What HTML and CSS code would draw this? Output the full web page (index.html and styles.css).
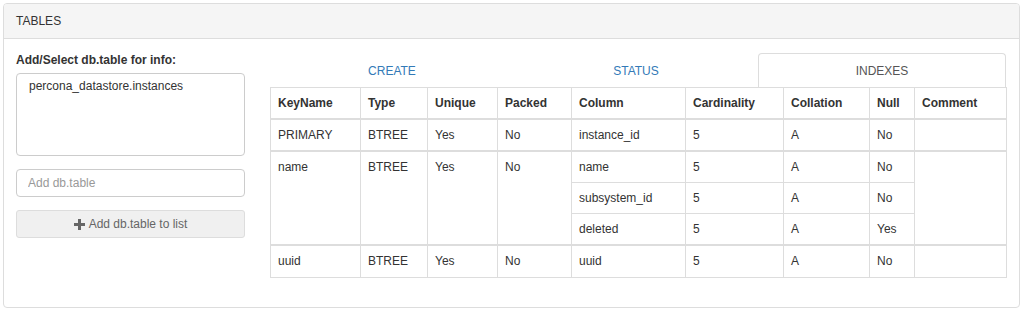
FILE: index.html
```html
<!DOCTYPE html>
<html lang="en">
<head>
    <meta charset="UTF-8">
    <title>Tables</title>
    <link rel="stylesheet" href="styles.css">
</head>
<body>
    <div class="panel">
        <div class="panel-heading">TABLES</div>
        <div class="panel-body">
            <div class="side">
                <label class="side-label">Add/Select db.table for info:</label>
                <div class="listbox">
                    <div class="listbox-item">percona_datastore.instances</div>
                </div>
                <input type="text" class="field" placeholder="Add db.table">
                <button class="btn">
                    <svg class="icon-plus" width="11" height="11" viewBox="0 0 11 11"><path d="M4 0h3v4h4v3H7v4H4V7H0V4h4z" fill="#666"/></svg>
                    Add db.table to list
                </button>
            </div>
            <div class="main">
                <ul class="tabs">
                    <li><a href="#">CREATE</a></li>
                    <li><a href="#">STATUS</a></li>
                    <li class="active"><a href="#">INDEXES</a></li>
                </ul>
                <table class="grid">
                    <colgroup>
                        <col style="width:90px"><col style="width:67px"><col style="width:70px"><col style="width:74px"><col style="width:114px"><col style="width:98px"><col style="width:86px"><col style="width:45px"><col style="width:92px">
                    </colgroup>
                    <thead>
                        <tr><th>KeyName</th><th>Type</th><th>Unique</th><th>Packed</th><th>Column</th><th>Cardinality</th><th>Collation</th><th>Null</th><th>Comment</th></tr>
                    </thead>
                    <tbody>
                        <tr><td>PRIMARY</td><td>BTREE</td><td>Yes</td><td>No</td><td>instance_id</td><td>5</td><td>A</td><td>No</td><td></td></tr>
                    </tbody>
                    <tbody>
                        <tr><td rowspan="3">name</td><td rowspan="3">BTREE</td><td rowspan="3">Yes</td><td rowspan="3">No</td><td>name</td><td>5</td><td>A</td><td>No</td><td rowspan="3"></td></tr>
                        <tr><td>subsystem_id</td><td>5</td><td>A</td><td>No</td></tr>
                        <tr><td>deleted</td><td>5</td><td>A</td><td>Yes</td></tr>
                    </tbody>
                    <tbody>
                        <tr><td>uuid</td><td>BTREE</td><td>Yes</td><td>No</td><td>uuid</td><td>5</td><td>A</td><td>No</td><td></td></tr>
                    </tbody>
                </table>
            </div>
        </div>
    </div>
</body>
</html>
```

FILE: styles.css
```css
* {
    box-sizing: border-box;
}
body {
    margin: 0;
    padding: 3px 4px 0 3px;
    font-family: "Liberation Sans", Arial, sans-serif;
    font-size: 12px;
    color: #333;
    background: #fff;
}
.panel {
    border: 1px solid #ddd;
    border-radius: 4px;
    height: 305px;
    width: 1017px;
}
.panel-heading {
    background-color: #f5f5f5;
    border-bottom: 1px solid #ddd;
    border-radius: 3px 3px 0 0;
    height: 35px;
    line-height: 34px;
    padding-left: 12px;
}
.panel-body {
    display: flex;
    gap: 25px;
    padding: 13px 13px 0 12px;
}
.side {
    width: 229px;
    display: flex;
    flex-direction: column;
}
.side-label {
    font-weight: bold;
    line-height: 17px;
    margin-bottom: 4px;
}
.listbox {
    height: 83px;
    border: 1px solid #ccc;
    border-radius: 4px;
    padding: 4px 12px;
}
.listbox-item {
    line-height: 16px;
}
.field {
    margin-top: 13px;
    height: 28px;
    border: 1px solid #ccc;
    border-radius: 4px;
    padding: 0 11px;
    font-family: inherit;
    font-size: 12px;
    color: #555;
}
.field::placeholder {
    color: #999;
}
.btn {
    margin-top: 13px;
    height: 28px;
    border: 1px solid #ddd;
    border-radius: 3px;
    background-color: #f0f0f0;
    color: #666;
    font-family: inherit;
    font-size: 12px;
    display: flex;
    align-items: center;
    justify-content: center;
    gap: 4px;
    cursor: pointer;
}
.main {
    width: 736px;
    padding-top: 1px;
}
.tabs {
    list-style: none;
    margin: 0;
    padding: 0;
    display: flex;
    height: 34px;
}
.tabs li {
    flex: 0 0 244px;
    text-align: center;
}
.tabs li.active {
    flex-basis: 248px;
}
.tabs li a {
    display: block;
    height: 34px;
    line-height: 34px;
    color: #337ab7;
    text-decoration: none;
    border: 1px solid transparent;
    border-bottom: none;
    border-radius: 4px 4px 0 0;
}
.tabs li.active a {
    color: #555;
    border-color: #ddd;
    background: #fff;
}
.grid {
    width: 736px;
    border-collapse: collapse;
    table-layout: fixed;
    border: 1px solid #ddd;
}
.grid th,
.grid td {
    border: 1px solid #ddd;
    padding: 7px 7px 6px 7px;
    line-height: 17px;
    text-align: left;
    vertical-align: top;
}
.grid th {
    border-bottom-width: 2px;
    font-weight: bold;
}
.grid tbody + tbody {
    border-top: 2px solid #ddd;
}
.grid tbody:last-child td {
    padding-bottom: 7px;
}
```
